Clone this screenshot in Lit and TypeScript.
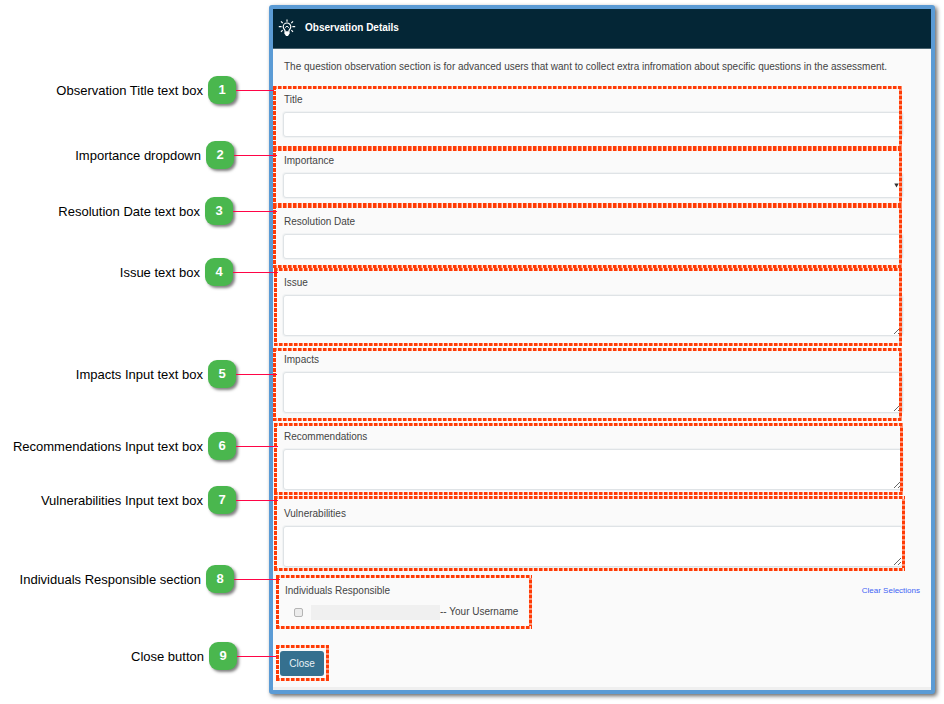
import { LitElement, html, css } from "lit";
import { customElement, property } from "lit/decorators.js";
import { styleMap } from "lit/directives/style-map.js";

interface Note {
  n: number;
  text: string;
  /** How far the dashed frame reaches past its content: top, right, bottom, left. */
  reach: [number, number, number, number];
  /** Height of the leader line below the top edge of the frame. */
  drop: number;
  /** Length of the leader line. */
  lead: number;
  /** How far the leader line runs into the frame. */
  into: number;
}

interface Field extends Note {
  id: string;
  label: string;
  kind: "text" | "select" | "area";
}

const FIELDS: Field[] = [
  { id: "title", label: "Title", kind: "text", n: 1, text: "Observation Title text box", reach: [6, -1, 12, 10], drop: 4, lead: 38, into: 1 },
  { id: "importance", label: "Importance", kind: "select", n: 2, text: "Importance dropdown", reach: [5, -1, 8, 10], drop: 7, lead: 43, into: 4 },
  { id: "date", label: "Resolution Date", kind: "text", n: 3, text: "Resolution Date text box", reach: [9, -1, 9, 10], drop: 6, lead: 44, into: 4 },
  { id: "issue", label: "Issue", kind: "area", n: 4, text: "Issue text box", reach: [7, -1, 10, 9], drop: 4, lead: 45, into: 4 },
  { id: "impacts", label: "Impacts", kind: "area", n: 5, text: "Impacts Input text box", reach: [4, -1, 8, 10], drop: 26, lead: 41, into: 4 },
  { id: "recommendations", label: "Recommendations", kind: "area", n: 6, text: "Recommendations Input text box", reach: [6, 0, 5, 9], drop: 23, lead: 42, into: 4 },
  { id: "vulnerabilities", label: "Vulnerabilities", kind: "area", n: 7, text: "Vulnerabilities Input text box", reach: [10, 2, 4, 9], drop: 4, lead: 42, into: 4 },
];

const PEOPLE: Note = { n: 8, text: "Individuals Responsible section", reach: [8, 11, 9, 7], drop: 4, lead: 46, into: 4 };
const CLOSE: Note = { n: 9, text: "Close button", reach: [6, 5, 5, 4], drop: 11, lead: 40, into: 1 };

/** Dashed frame laid over a control, with a numbered callout to its left. */
@customElement("note-frame")
export class NoteFrame extends LitElement {
  @property({ attribute: false }) note!: Note;

  static styles = css`
    :host {
      position: absolute;
      inset: 0;
      pointer-events: none;
      z-index: 1;
    }
    .frame {
      position: absolute;
      --h: repeating-linear-gradient(90deg, #ff3b05 0 3px, #ff8a68 3px 4px, #ffe3da 4px 5px);
      --v: repeating-linear-gradient(180deg, #ff3b05 0 4px, #fff3ef 4px 5px);
      --r: repeating-linear-gradient(180deg, #ff3b05 0 3px, #ff9376 3px 5px);
      background:
        var(--h) top / 100% 3px no-repeat,
        var(--h) bottom / 100% 3px no-repeat,
        var(--v) left / 3px 100% no-repeat,
        var(--r) right / 3px 100% no-repeat;
    }
    .callout {
      position: absolute;
      display: flex;
      align-items: center;
      height: 28px;
      margin-top: -14px;
      white-space: nowrap;
      font-size: 13px;
      color: #000;
    }
    .text {
      padding-top: 2px;
    }
    .badge {
      display: grid;
      place-items: center;
      width: 28px;
      height: 28px;
      margin-left: 5px;
      border-radius: 9px;
      background: #4ab74e;
      box-shadow: 2px 2px 3px rgba(0, 0, 0, 0.5);
      color: #fff;
      font-weight: bold;
    }
    .lead {
      height: 1px;
      background: #ff0546;
    }
  `;

  render() {
    const { n, text, reach, drop, lead, into } = this.note;
    return html`
      <div class="frame" style=${styleMap({ inset: reach.map((r) => `${-r}px`).join(" ") })}>
        <div class="callout" style=${styleMap({ top: `${drop}px`, right: `calc(100% - ${into}px)` })}>
          <span class="text">${text}</span>
          <span class="badge">${n}</span>
          <span class="lead" style=${styleMap({ width: `${lead}px` })}></span>
        </div>
      </div>
    `;
  }
}

@customElement("app-root")
export class AppRoot extends LitElement {
  static styles = css`
    :host {
      display: block;
      padding: 5px 9px 9px 269px;
      background: #fff;
      font-family: "Liberation Sans", Arial, sans-serif;
      font-size: 10px;
      line-height: 16px;
      color: #444;
    }
    * {
      box-sizing: border-box;
    }
    .panel {
      border: 4px solid #5b9bd5;
      border-radius: 3px;
      background: #fafafa;
      box-shadow: 2px 2px 4px rgba(0, 0, 0, 0.6);
    }
    .head {
      display: flex;
      align-items: center;
      gap: 9px;
      height: 40px;
      padding: 0 5px 1px;
      border-bottom: 1px solid #4b6470;
      background: #042636;
      color: #fff;
    }
    h1 {
      margin: 0;
      font-size: 10px;
      line-height: 16px;
    }
    .body {
      padding: 10px 11px 11px 10px;
    }
    .intro {
      margin: 0 0 17px;
      padding-left: 1px;
    }
    .fields {
      display: flex;
      flex-direction: column;
      gap: 16px;
      padding-right: 17px;
    }
    .field {
      position: relative;
      display: flex;
      flex-direction: column;
      gap: 4px;
    }
    .field label {
      padding-left: 1px;
    }
    .control {
      display: block;
      width: 100%;
      height: 25px;
      margin: 0;
      padding: 3px 6px;
      border: 1px solid #dfe3e6;
      border-radius: 3px;
      background: #fff;
      box-shadow: 0 0 0 1px #f1f3f4;
      font: inherit;
      color: inherit;
      appearance: none;
    }
    .area {
      height: 41px;
      resize: vertical;
    }
    .pick {
      position: relative;
    }
    .arrow {
      position: absolute;
      right: 4px;
      top: 10px;
    }
    .foot {
      display: flex;
      justify-content: space-between;
      align-items: flex-start;
      margin-top: 16px;
    }
    .people {
      position: relative;
    }
    fieldset {
      margin: 0;
      padding: 0;
      border: 0;
    }
    legend {
      padding: 0 0 0 2px;
    }
    .person {
      display: flex;
      align-items: center;
      margin-top: 5px;
      padding-left: 11px;
    }
    .tick {
      appearance: none;
      width: 9px;
      height: 9px;
      margin: 0 8px 0 0;
      border: 1px solid #b5b5b5;
      border-radius: 2px;
      background: #ececec;
    }
    .blank {
      width: 129px;
      height: 15px;
      background: #f0f0f0;
    }
    .user {
      min-width: 81px;
    }
    .clear {
      font-size: 8px;
      color: #3f63f5;
      text-decoration: none;
    }
    .act {
      position: relative;
      width: fit-content;
      margin: 31px 0 0 -3px;
    }
    .close {
      display: block;
      width: 44px;
      height: 25px;
      padding: 0;
      border: 0;
      border-radius: 3px;
      background: #35708f;
      font: inherit;
      color: #e9f1f5;
    }
    .strip {
      height: 3px;
      background: #efefef;
    }
  `;

  private control(f: Field) {
    if (f.kind === "area") return html`<textarea class="control area" id=${f.id}></textarea>`;
    if (f.kind === "text") return html`<input class="control" type="text" id=${f.id} />`;
    return html`<div class="pick">
      <select class="control" id=${f.id}>
        <option></option>
      </select>
      <svg class="arrow" width="5" height="5" viewBox="0 0 5 5" aria-hidden="true">
        <path d="M0.3 0.5h4.4L2.5 4.5z" fill="#333" />
      </svg>
    </div>`;
  }

  render() {
    return html`
      <main class="panel">
        <header class="head">
          <svg width="18" height="18" viewBox="0 0 18 18" fill="none" stroke="#fff" stroke-width="1.2" aria-hidden="true">
            <path d="M9 0.5v2.2M3 2.4l1.7 1.8M15 2.4l-1.7 1.8M0.8 7.6h2.8M14.4 7.6h2.8M3 12.8l1.6-1.6M15 12.8l-1.6-1.6" />
            <path d="M7.2 12.6c0-1.8-2-2.6-2-4.8a3.8 3.8 0 0 1 7.6 0c0 2.2-2 3-2 4.8" />
            <path d="M7.2 8.6L9 7.2l1.8 1.4" stroke-width="1" />
            <path d="M6.4 12.2h5.2v2.4L10 17H8l-1.6-2.4z" fill="#fff" stroke="none" />
          </svg>
          <h1>Observation Details</h1>
        </header>
        <form class="body" @submit=${(e: Event) => e.preventDefault()}>
          <p class="intro">
            The question observation section is for advanced users that want to collect extra infromation about specific questions in the assessment.
          </p>
          <div class="fields">
            ${FIELDS.map(
              (f) => html`<div class="field">
                <label for=${f.id}>${f.label}</label>
                ${this.control(f)}
                <note-frame .note=${f}></note-frame>
              </div>`
            )}
          </div>
          <div class="foot">
            <div class="people">
              <fieldset>
                <legend>Individuals Responsible</legend>
                <label class="person">
                  <input class="tick" type="checkbox" />
                  <span class="blank"></span>
                  <span class="user">-- Your Username</span>
                </label>
              </fieldset>
              <note-frame .note=${PEOPLE}></note-frame>
            </div>
            <a class="clear" href="#">Clear Selections</a>
          </div>
          <div class="act">
            <button class="close" type="button">Close</button>
            <note-frame .note=${CLOSE}></note-frame>
          </div>
        </form>
        <div class="strip"></div>
      </main>
    `;
  }
}
